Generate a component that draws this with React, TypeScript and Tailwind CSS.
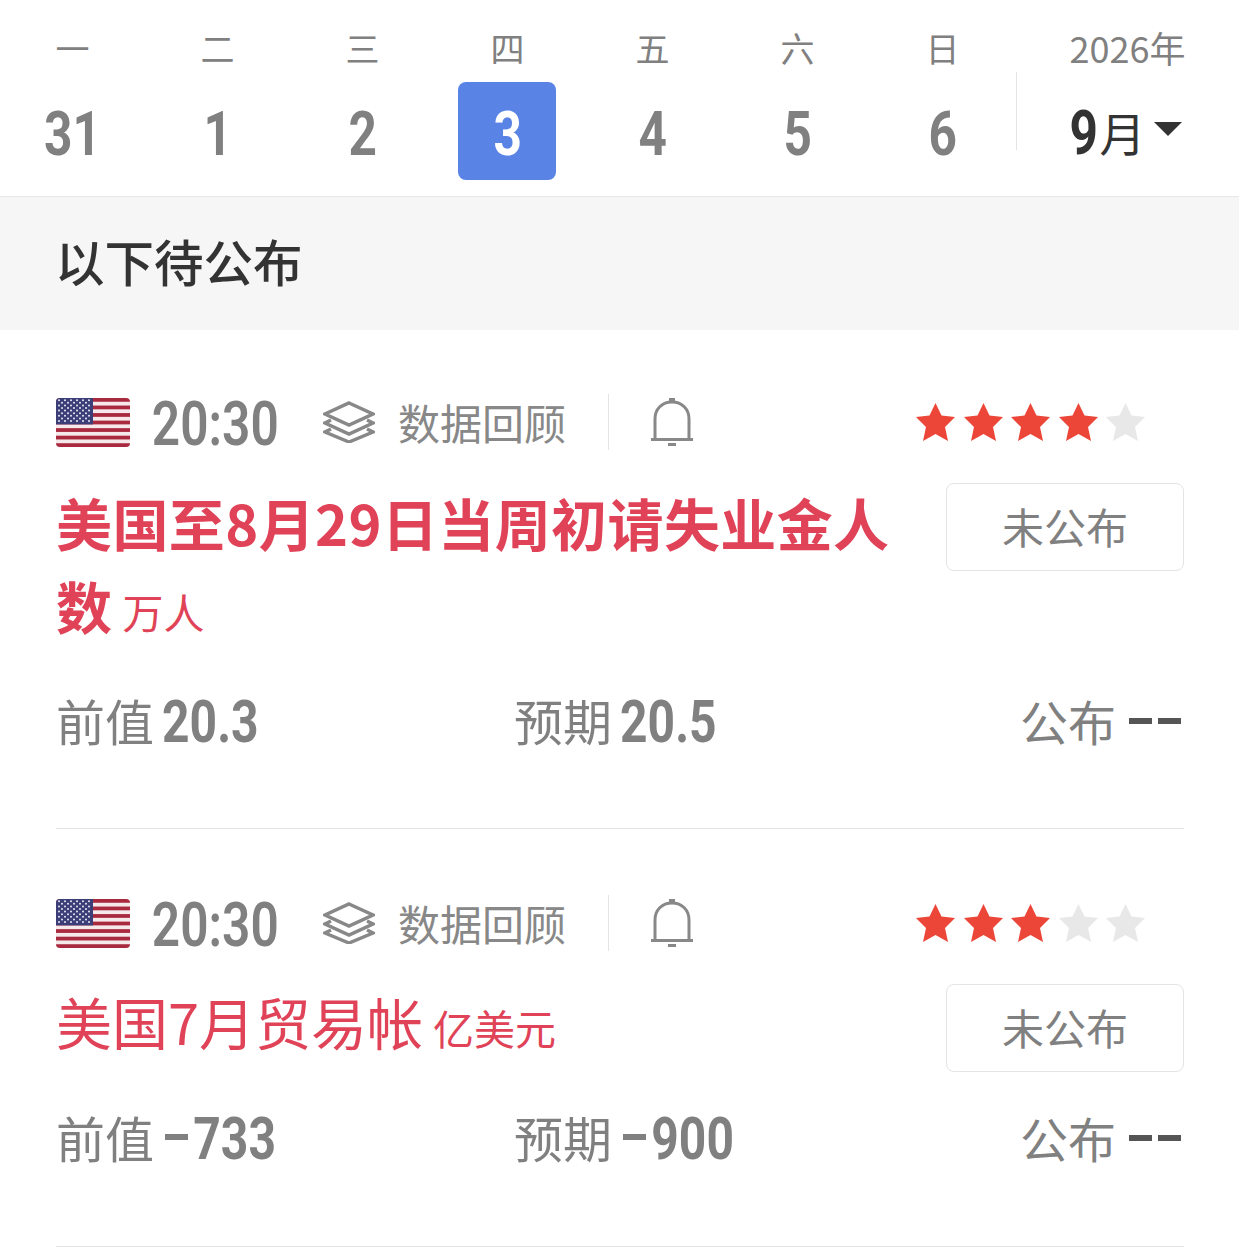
import React from "react";

const cjk = "font-['Noto_Sans_CJK_SC','Noto_Sans',sans-serif]";
const din = "font-['Roboto','Liberation_Sans',sans-serif]";

const days = [
  { week: "一", day: "31" },
  { week: "二", day: "1" },
  { week: "三", day: "2" },
  { week: "四", day: "3", active: true },
  { week: "五", day: "4" },
  { week: "六", day: "5" },
  { week: "日", day: "6" },
];

function Flag() {
  const stripes = [0, 2, 4, 6, 8, 10, 12];
  const stars: React.ReactNode[] = [];
  for (let r = 0; r < 9; r++) {
    for (let c = 0; c < (r % 2 ? 5 : 6); c++) {
      stars.push(<circle key={r + "-" + c} cx={(r % 2 ? 6 : 3) + c * 6} cy={2.2 + r * 2.6} r={1} fill="#e8e8f5" />);
    }
  }
  return (
    <svg width="74" height="49" viewBox="0 0 74 49" className="rounded-[4px] shrink-0">
      <rect width="74" height="49" fill="#f6e9ec" />
      {stripes.map((i) => (
        <rect key={i} y={(i * 49) / 13} width="74" height={49 / 13} fill="#a92a3f" />
      ))}
      <rect width="37" height="26.4" fill="#3c3e78" />
      {stars}
    </svg>
  );
}

function Layers() {
  return (
    <svg width="52" height="42" viewBox="0 0 52 42" fill="none" stroke="#888888" strokeWidth="3.5" className="shrink-0">
      <path d="M26 2 L50 13 L26 24 L2 13 Z" />
      <path d="M8 19 L2 22 L26 33 L50 22 L44 19" />
      <path d="M8 28 L2 31 L26 41 L50 31 L44 28" />
    </svg>
  );
}

function Bell() {
  return (
    <svg width="44" height="50" viewBox="0 0 44 50" fill="none" className="shrink-0">
      <path d="M5 42 V22 C5 12 12 5 22 5 C32 5 39 12 39 22 V42" stroke="#888888" strokeWidth="3" />
      <path d="M1 42.5 H43" stroke="#888888" strokeWidth="3" />
      <rect x="19" y="1" width="6" height="5" fill="#888888" />
      <rect x="18" y="46" width="8" height="3" fill="#888888" />
    </svg>
  );
}

function Star({ on }: { on: boolean }) {
  return (
    <svg width="41" height="40" viewBox="0 0 41 40" className="shrink-0">
      <polygon points="20.5,1 26.5,13.5 40,15 30,25 33,39 20.5,32 8,39 11,25 1,15 14.5,13.5" fill={on ? "#ec4638" : "#e8e8e8"} />
    </svg>
  );
}

// no condensed font installed, so squeeze Roboto sideways inside a fixed-width box
function Cond({ text, className }: { text: string; className: string }) {
  return (
    <span className={`${din} inline-flex justify-center whitespace-nowrap ${className}`}>
      <span className="inline-block scale-x-[0.8]">{text}</span>
    </span>
  );
}

function Dash({ className }: { className?: string }) {
  return <span className={`inline-block h-[6px] w-[23px] bg-current ${className ?? ""}`} />;
}

function Value({ label, value, numClass }: { label: string; value: string; numClass: string }) {
  const minus = value.startsWith("-");
  return (
    <div className="flex items-center h-14">
      <span className={`${cjk} text-[49px] leading-[56px] text-[#808080]`}>{label}</span>
      {minus && <Dash className="ml-[11px] text-[#808080]" />}
      <Cond
        text={minus ? value.slice(1) : value}
        className={`${minus ? "ml-[3px]" : "ml-[6px]"} ${numClass} mt-[4px] text-[60px] leading-[56px] font-bold text-[#808080]`}
      />
    </div>
  );
}

function Item({
  stars,
  title,
  unit,
  bold,
  prev,
  expect,
  boxClass,
  titleClass,
  gapClass,
}: {
  stars: number;
  title: string;
  unit: string;
  bold?: boolean;
  prev: string;
  expect: string;
  boxClass: string;
  titleClass: string;
  gapClass: string;
}) {
  const numClass = prev.startsWith("-") ? "w-[88px]" : "w-[100px]";
  return (
    <div className={`ml-14 mr-[55px] border-b border-[#e4e4e4] ${boxClass}`}>
      <div className="flex items-center h-14">
        <Flag />
        <Cond text="20:30" className="ml-[20px] mt-[4px] w-[130px] text-[62px] leading-[56px] font-semibold text-[#808080]" />
        <span className="ml-[43px]">
          <Layers />
        </span>
        <span className={`${cjk} ml-[23px] text-[42px] leading-[56px] text-[#888888]`}>数据回顾</span>
        <span className="ml-[42px] h-14 w-px bg-[#e4e4e4]" />
        <span className="ml-[41px]">
          <Bell />
        </span>
        <div className="ml-auto mr-[38px] flex gap-[6.5px]">
          {[0, 1, 2, 3, 4].map((i) => (
            <Star key={i} on={i < stars} />
          ))}
        </div>
      </div>
      <div className="mt-[33px] flex items-start justify-between">
        <div
          className={`${cjk} ${titleClass} w-[840px] text-[56px] leading-[83px] text-[#e04358] ${
            bold ? "font-bold tracking-[0.4px]" : ""
          }`}
        >
          {title}
          <span className="ml-[10px] text-[41px] font-normal leading-none tracking-normal">{unit}</span>
        </div>
        <div
          className={`${cjk} flex h-[88px] w-[238px] items-center justify-center rounded-[8px] border border-[#e4e4e4] pb-[3px] text-[42px] text-[#808080]`}
        >
          未公布
        </div>
      </div>
      <div className={`grid grid-cols-[458px_1fr_auto] ${gapClass}`}>
        <Value label="前值" value={prev} numClass={numClass} />
        <Value label="预期" value={expect} numClass={numClass} />
        <div className="flex items-center h-14 pr-[3px]">
          <span className={`${cjk} text-[48px] leading-[56px] text-[#808080]`}>公布</span>
          <Dash className="ml-[13px] mt-[2px] text-[#555555]" />
          <Dash className="ml-[6px] mt-[2px] text-[#555555]" />
        </div>
      </div>
    </div>
  );
}

export default function App() {
  return (
    <div className="w-[1239px] min-h-[1249px] bg-white overflow-hidden">
      <div className="flex h-[197px] border-b border-[#e8e8e8]">
        {days.map((d, i) => (
          <div key={d.week} className={`w-[145px] shrink-0 flex flex-col items-center ${i === 0 ? "-ml-px" : ""}`}>
            <div className={`${cjk} mt-[24px] h-[48px] pl-[2px] text-[34px] leading-[48px] text-[#808080]`}>{d.week}</div>
            <div
              className={`mt-[10px] flex h-[98px] w-[98px] items-center justify-center rounded-[8px] pl-[3px] pt-[5px] text-[62px] font-bold ${
                d.active ? "bg-[#5a83e6] text-white" : "text-[#808080]"
              }`}
            >
              <Cond text={d.day} className="w-[70px] leading-[62px]" />
            </div>
          </div>
        ))}
        <div className="flex-1 ml-[2px] relative flex flex-col items-center">
          <span className="absolute left-0 top-[72px] h-[78px] w-px bg-[#e4e4e4]" />
          <div className={`${cjk} mt-[23px] h-[48px] text-[36px] leading-[48px] text-[#808080]`}>2026年</div>
          <div className="mt-[11px] flex h-[98px] items-center pr-[6px] text-[#333333]">
            <Cond text="9" className="mt-[2px] w-[32px] text-[62px] font-bold" />
            <span className={`${cjk} text-[46px]`}>月</span>
            <span className="ml-[8px] mb-[4px] h-0 w-0 border-x-[14px] border-t-[14px] border-x-transparent border-t-[#333333]" />
          </div>
        </div>
      </div>
      <div className={`${cjk} flex h-[133px] items-center bg-[#f6f6f6] pb-1 pl-[55px] text-[49.5px] font-medium text-[#333333]`}>
        以下待公布
      </div>
      <Item
        stars={4}
        title="美国至8月29日当周初请失业金人数"
        unit="万人"
        bold
        prev="20.3"
        expect="20.5"
        boxClass="pt-16 pb-[80px]"
        titleClass="-mt-[3px]"
        gapClass="mt-[46px]"
      />
      <Item
        stars={3}
        title="美国7月贸易帐"
        unit="亿美元"
        prev="-733"
        expect="-900"
        boxClass="pt-[66px] pb-[81px]"
        titleClass="-mt-[5px]"
        gapClass="mt-[37px]"
      />
    </div>
  );
}
